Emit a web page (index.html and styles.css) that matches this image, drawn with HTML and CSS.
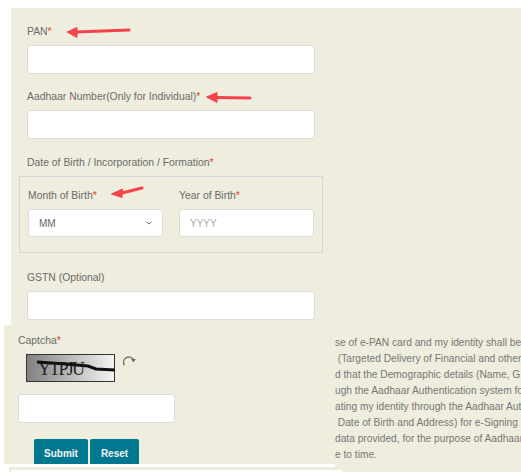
FILE: index.html
```html
<!DOCTYPE html>
<html lang="en">

<head>
	<meta charset="UTF-8">
	<meta name="viewport" content="width=device-width, initial-scale=1.0">
	<title>e-PAN Application</title>
	<link rel="stylesheet" href="styles.css">
</head>

<body>
	<div class="upper-panel">
		<label class="field-label" for="pan">PAN<span class="req">*</span></label>
		<input type="text" id="pan" class="text-input wide first-input">
		<label class="field-label" for="aadhaar">Aadhaar Number(Only for Individual)<span class="req">*</span></label>
		<input type="text" id="aadhaar" class="text-input wide">
		<div class="field-label">Date of Birth / Incorporation / Formation<span class="req">*</span></div>
		<div class="dob-box">
			<div class="dob-col">
				<label class="field-label" for="month">Month of Birth<span class="req">*</span></label>
				<div class="select-wrap">
					<select id="month" class="text-input select-input">
						<option>MM</option>
					</select>
					<svg class="chevron" width="6" height="4" viewBox="0 0 6 4">
						<path d="M0.6 0.7 L3 3.1 L5.4 0.7" fill="none" stroke="#666" stroke-width="1"/>
					</svg>
				</div>
			</div>
			<div class="dob-col">
				<label class="field-label" for="year">Year of Birth<span class="req">*</span></label>
				<input type="text" id="year" class="text-input year-input" placeholder="YYYY">
			</div>
		</div>
		<label class="field-label" for="gstn">GSTN (Optional)</label>
		<input type="text" id="gstn" class="text-input wide">
	</div>

	<div class="lower-row">
		<div class="left-col">
			<form class="captcha-panel">
				<label class="field-label" for="captcha">Captcha<span class="req">*</span></label>
				<div class="captcha-row">
					<svg class="captcha-img" width="89" height="28" viewBox="0 0 89 28">
						<defs>
							<linearGradient id="captchaBg">
								<stop offset="0" stop-color="#808080"/>
								<stop offset="1" stop-color="#f4f4f4"/>
							</linearGradient>
						</defs>
						<rect x="0.5" y="0.5" width="88" height="27" fill="url(#captchaBg)" stroke="#333"/>
						<text x="12" y="21" class="captcha-text" textLength="47">YTPJU</text>
						<path d="M11 8 L40 10 L62 12 L70 15 L89 16" fill="none" stroke="#111" stroke-width="3"/>
					</svg>
					<svg class="refresh" width="14" height="12" viewBox="0 0 14 12">
						<path d="M2.4 10.4 A5.2 5.2 0 1 1 11.4 4.4" fill="none" stroke="#777" stroke-width="1.4"/>
						<path d="M9.2 4 L13.8 4 L11.5 7.4 Z" fill="#666"/>
					</svg>
				</div>
				<input type="text" id="captcha" class="text-input captcha-input">
				<div class="button-group">
					<button type="button" class="btn">Submit</button>
					<button type="button" class="btn btn-reset">Reset</button>
				</div>
			</form>
			<div class="white-strip"></div>
			<div class="next-panel"></div>
		</div>
		<div class="consent">
			<div class="line">se of e-PAN card and my identity shall be</div>
			<div class="line">&nbsp;(Targeted Delivery of Financial and other</div>
			<div class="line">d that the Demographic details (Name, G</div>
			<div class="line">ugh the Aadhaar Authentication system for</div>
			<div class="line">ating my identity through the Aadhaar Aut</div>
			<div class="line">&nbsp;Date of Birth and Address) for e-Signing</div>
			<div class="line">data provided, for the purpose of Aadhaar</div>
			<div class="line">e to time.</div>
		</div>
	</div>

	<!-- annotation arrows drawn over the form -->
	<svg class="arrows" width="521" height="472" viewBox="0 0 521 472">
		<g fill="#f5434b" stroke="#f5434b" stroke-linejoin="round">
			<path d="M129 30 L76 32" fill="none" stroke-width="3" stroke-linecap="round"/>
			<path d="M67 32 L77 27.5 L77 37.5 Z" stroke-width="1"/>
			<path d="M250 98 L216 97.5" fill="none" stroke-width="3" stroke-linecap="round"/>
			<path d="M206.5 97 L217 92.5 L217 102.5 Z" stroke-width="1"/>
			<path d="M142 188 L120 193.5" fill="none" stroke-width="3" stroke-linecap="round"/>
			<path d="M111.5 194 L122.5 189 L122 197.5 Z" stroke-width="1"/>
		</g>
	</svg>
</body>

</html>
```

FILE: styles.css
```css
html, body
{
	margin: 0;
	height: 472px;
	overflow: hidden;
	background-color: #fff;
}

body
{
	position: relative;
	font-family: 'Liberation Sans', Arial, sans-serif;
	font-size: 10.4px;
	color: #6b6b6b;
}

.upper-panel
{
	margin: 8px 0 0 11px;
	padding: 16px 0 0 16px;
	height: 301px;
	background-color: #efeddd;
}

.field-label
{
	display: block;
	padding-top: 1px;
	line-height: 14px;
	margin-bottom: 6px;
}

.req
{
	color: #e8401c;
}

.text-input
{
	display: block;
	height: 29px;
	padding: 0 10px;
	border: 1px solid #dcdcdc;
	border-radius: 3px;
	background-color: #fff;
	box-sizing: border-box;
	font-family: inherit;
	font-size: 10px;
	color: #666;
}

.wide
{
	width: 288px;
	margin-bottom: 16px;
}

.first-input
{
	margin-bottom: 15px;
}

.dob-box
{
	display: flex;
	gap: 16px;
	width: 304px;
	height: 77px;
	margin: 0 0 17px -8px;
	padding: 11px 8px 0;
	border: 1px solid #d6d6d6;
	box-sizing: border-box;
}

.dob-col
{
	width: 135px;
}

.select-wrap
{
	position: relative;
}

.select-input
{
	width: 135px;
	height: 28px;
	appearance: none;
}

.chevron
{
	position: absolute;
	top: 12px;
	right: 11px;
}

.year-input
{
	width: 135px;
	height: 28px;
}

.year-input::placeholder
{
	color: #aaa;
	opacity: 1;
}

.lower-row
{
	display: flex;
	height: 147px;
	margin-left: 4px;
}

.left-col
{
	width: 331px;
	flex-shrink: 0;
}

.captcha-panel
{
	height: 139px;
	padding: 8px 0 0 14px;
	background-color: #efeddd;
	box-sizing: border-box;
	overflow: hidden;
}

.captcha-row
{
	display: flex;
	align-items: flex-start;
	gap: 7px;
	margin-left: 8px;
	margin-bottom: 12px;
}

.captcha-img,
.refresh
{
	display: block;
}

.refresh
{
	margin-top: 1px;
}

.captcha-text
{
	font-family: 'Liberation Serif', serif;
	font-size: 18px;
	fill: #222;
}

.captcha-input
{
	width: 157px;
	margin-bottom: 16px;
}

.button-group
{
	display: flex;
	gap: 2px;
	margin-left: 16px;
}

.btn
{
	width: 54px;
	height: 28px;
	padding: 0;
	border: none;
	border-radius: 2px;
	background-color: #00788f;
	color: #f4f4f4;
	font-family: inherit;
	font-size: 10px;
	font-weight: bold;
}

.btn-reset
{
	width: 49px;
}

.white-strip
{
	height: 3px;
	background-color: #fff;
}

.next-panel
{
	position: relative;
	height: 5px;
	margin-left: 5px;
	background-color: #efeddd;
}

.next-panel::after
{
	content: "";
	position: absolute;
	left: 2px;
	top: 3px;
	width: 331px;
	height: 2px;
	background-color: #fff;
}

.consent
{
	flex: 1;
	padding-top: 10px;
	background-color: #efeddd;
	color: #777;
	font-size: 10.2px;
	overflow: hidden;
}

.line
{
	line-height: 16px;
	white-space: nowrap;
}

.arrows
{
	position: absolute;
	left: 0;
	top: 0;
	pointer-events: none;
}
```
